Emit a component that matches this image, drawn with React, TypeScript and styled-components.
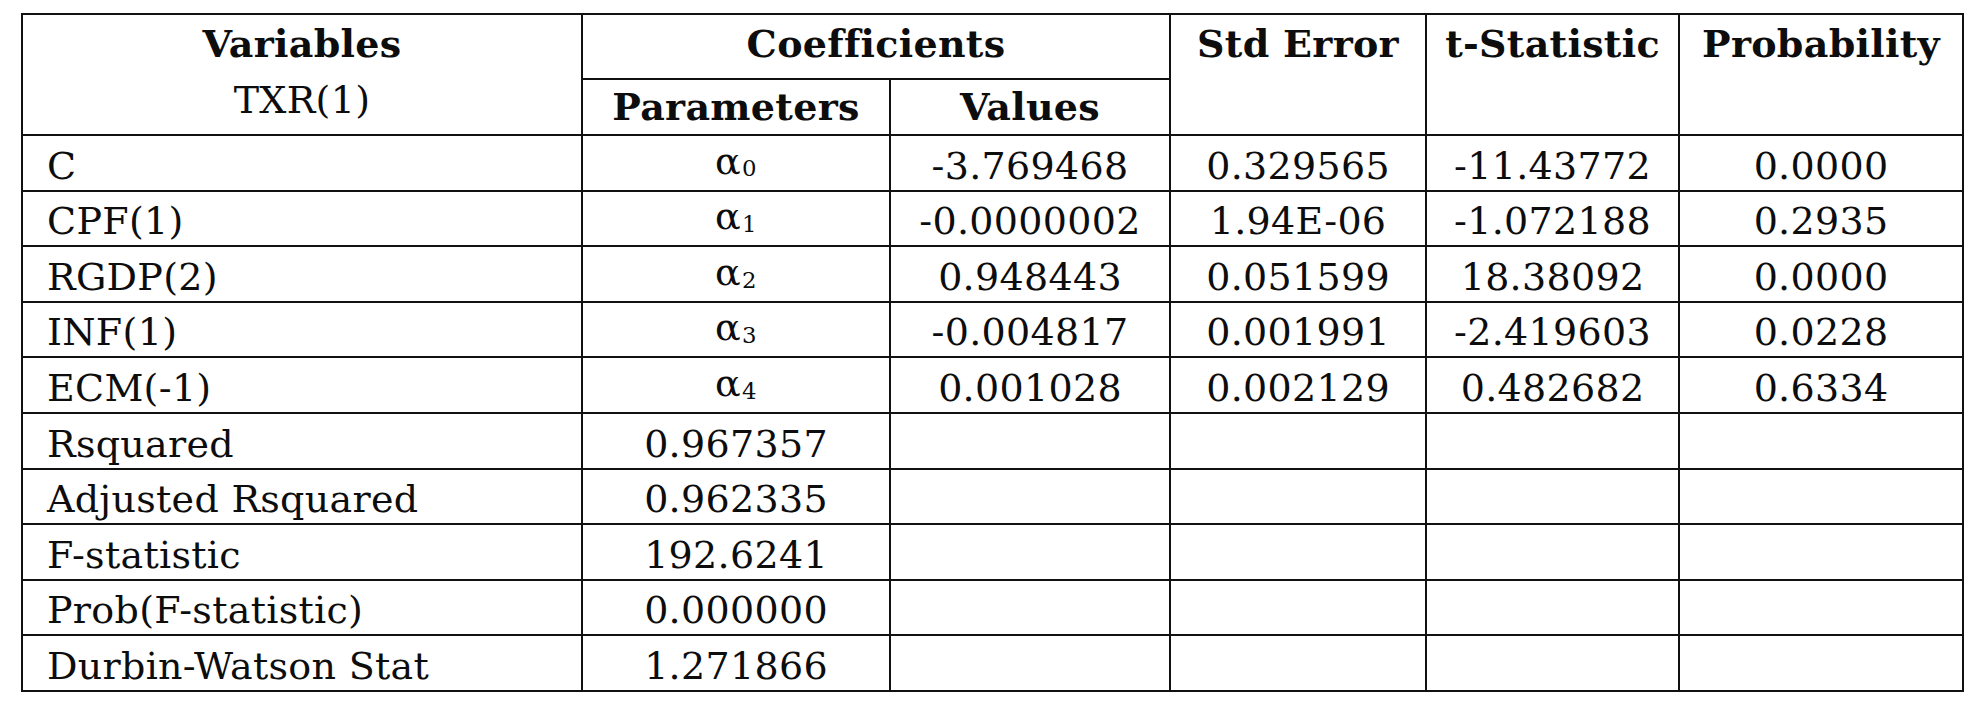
import styled, { createGlobalStyle } from 'styled-components';

interface IRow {
  name: string;
  param?: number;
  value: string;
  stdError?: string;
  tStat?: string;
  prob?: string;
}

const coefRows: IRow[] = [
  { name: 'C', param: 0, value: '-3.769468', stdError: '0.329565', tStat: '-11.43772', prob: '0.0000' },
  { name: 'CPF(1)', param: 1, value: '-0.0000002', stdError: '1.94E-06', tStat: '-1.072188', prob: '0.2935' },
  { name: 'RGDP(2)', param: 2, value: '0.948443', stdError: '0.051599', tStat: '18.38092', prob: '0.0000' },
  { name: 'INF(1)', param: 3, value: '-0.004817', stdError: '0.001991', tStat: '-2.419603', prob: '0.0228' },
  { name: 'ECM(-1)', param: 4, value: '0.001028', stdError: '0.002129', tStat: '0.482682', prob: '0.6334' },
];

const statRows: IRow[] = [
  { name: 'Rsquared', value: '0.967357' },
  { name: 'Adjusted Rsquared', value: '0.962335' },
  { name: 'F-statistic', value: '192.6241' },
  { name: 'Prob(F-statistic)', value: '0.000000' },
  { name: 'Durbin-Watson Stat', value: '1.271866' },
];

// distances between the grid lines of the reference table
const colWidths = [560, 308, 280, 256, 253, 284];

const App = () => {
  return (
    <Page>
      <GlobalStyle />
      <Table>
        <colgroup>
          {colWidths.map((w, i) => (
            <col key={i} style={{ width: w }} />
          ))}
        </colgroup>
        <thead>
          <TopRow>
            <HeadCell rowSpan={2}>
              Variables
              <br />
              <Plain>TXR(1)</Plain>
            </HeadCell>
            <HeadCell colSpan={2}>Coefficients</HeadCell>
            <HeadCell rowSpan={2}>Std Error</HeadCell>
            <HeadCell rowSpan={2}>t-Statistic</HeadCell>
            <HeadCell rowSpan={2}>Probability</HeadCell>
          </TopRow>
          <SubRow>
            <SubHead>Parameters</SubHead>
            <SubHead>Values</SubHead>
          </SubRow>
        </thead>
        <tbody>
          {coefRows.map((row) => (
            <Row key={row.name}>
              <Cell $align='left'>{row.name}</Cell>
              <Cell>
                α<Sub>{row.param}</Sub>
              </Cell>
              <Cell>{row.value}</Cell>
              <Cell>{row.stdError}</Cell>
              <Cell>{row.tStat}</Cell>
              <Cell>{row.prob}</Cell>
            </Row>
          ))}
          {statRows.map((row) => (
            <Row key={row.name}>
              <Cell $align='left'>{row.name}</Cell>
              <Cell>{row.value}</Cell>
              <Cell />
              <Cell />
              <Cell />
              <Cell />
            </Row>
          ))}
        </tbody>
      </Table>
    </Page>
  );
};

export default App;

const GlobalStyle = createGlobalStyle`
  html, body {
    margin: 0;
    padding: 0;
    background: #ffffff;
  }
`;

const Page = styled.div`
  padding: 13px 0 0 21px;
  font-family: 'DejaVu Serif', 'Liberation Serif', serif;
  font-size: 38px;
  letter-spacing: 0.3px;
  color: #0d0d0d;
`;

const Table = styled.table`
  border-collapse: collapse;
  table-layout: fixed;
  width: 1943px;
  th,
  td {
    border: 2px solid #111111;
  }
`;

const TopRow = styled.tr`
  height: 65px;
`;

const SubRow = styled.tr`
  height: 56px;
`;

const HeadCell = styled.th`
  vertical-align: top;
  text-align: center;
  padding: 1px 0 0;
  line-height: 56px;
  font-weight: 700;
`;

const Plain = styled.span`
  font-weight: 400;
`;

const SubHead = styled.th`
  vertical-align: bottom;
  text-align: center;
  padding: 0 0 7px;
  line-height: 40px;
  font-weight: 700;
`;

const Row = styled.tr`
  height: 55.6px;
`;

const Cell = styled.td<{ $align?: 'left' | 'center' }>`
  vertical-align: bottom;
  text-align: ${(props) => props.$align ?? 'center'};
  padding: 0 0 4px ${(props) => (props.$align === 'left' ? '24px' : '0')};
  line-height: 40px;
  white-space: nowrap;
`;

const Sub = styled.span`
  font-size: 0.6em;
  position: relative;
  top: 0.12em;
  margin-left: 1px;
`;
